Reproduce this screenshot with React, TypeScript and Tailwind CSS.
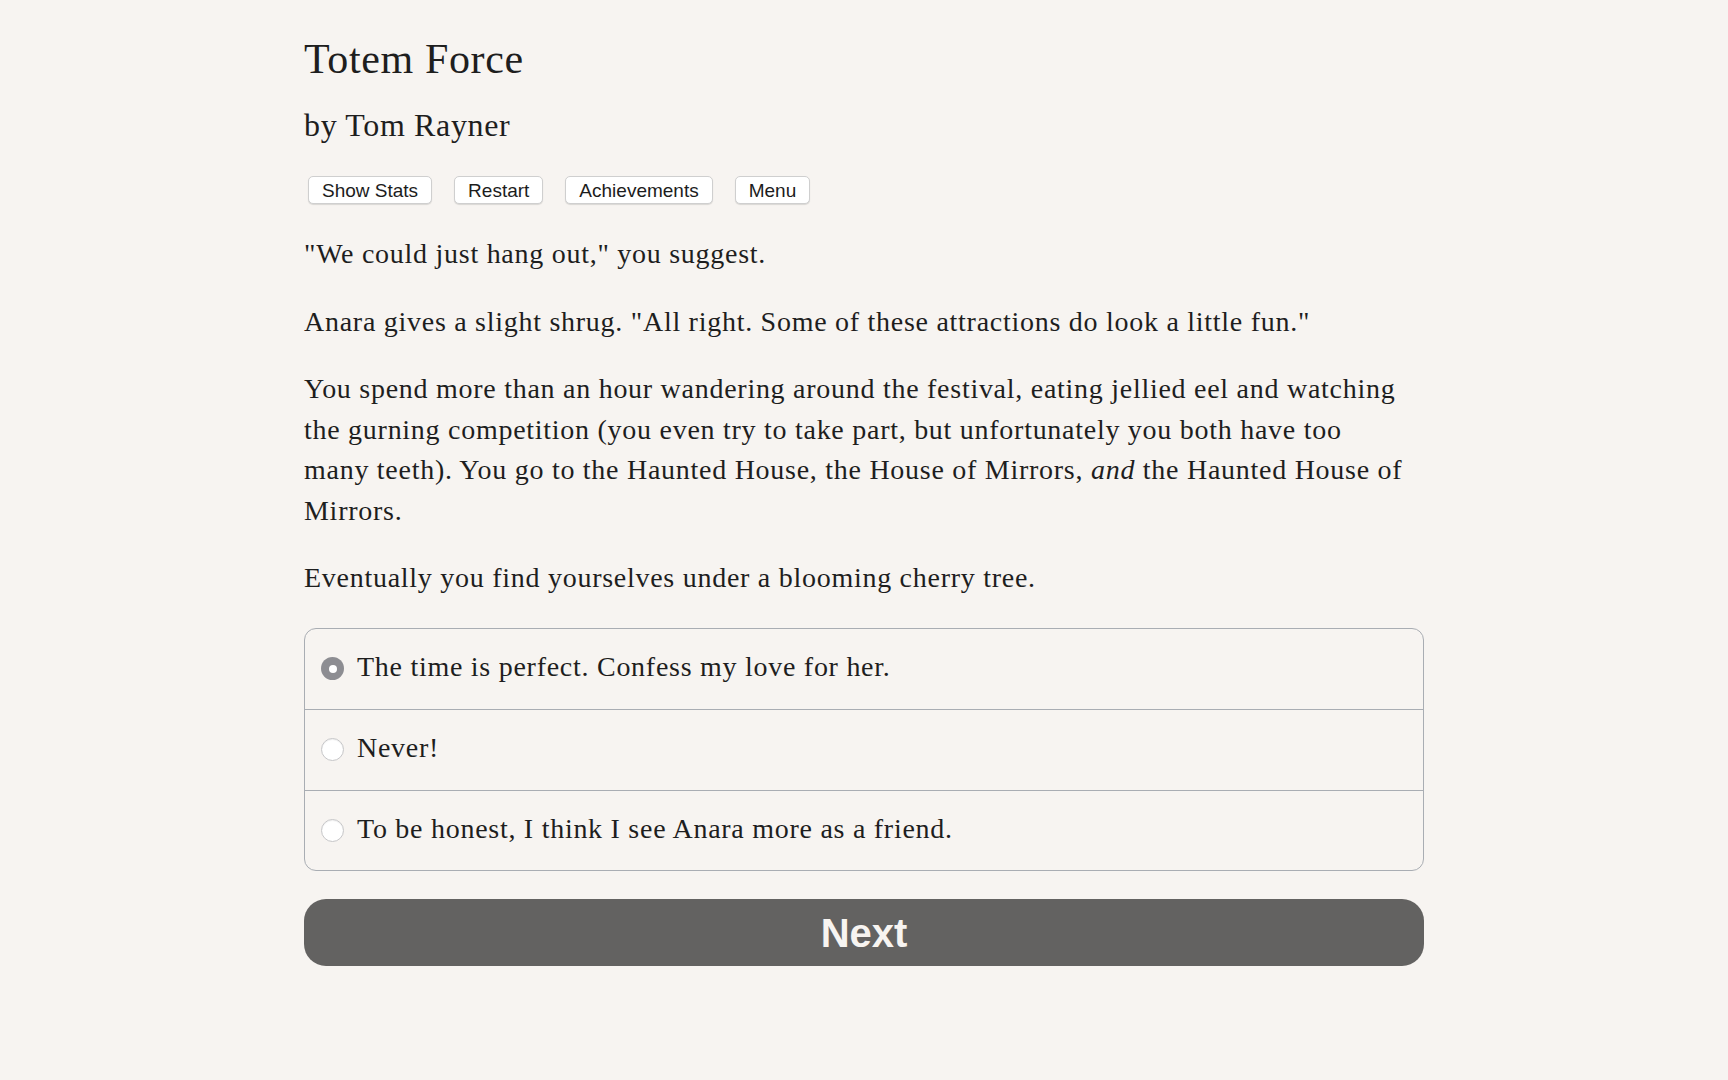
import { useState } from "react";

const choices = [
  "The time is perfect. Confess my love for her.",
  "Never!",
  "To be honest, I think I see Anara more as a friend.",
];

function Radio({ checked }: { checked: boolean }) {
  if (checked) {
    return (
      <span className="flex items-center justify-center w-[23px] h-[23px] shrink-0 rounded-full bg-[#8d8d92]">
        <span className="w-[8px] h-[8px] rounded-full bg-white" />
      </span>
    );
  }
  return (
    <span className="w-[23px] h-[23px] shrink-0 rounded-full bg-white border border-[#c6c6c8] shadow-[inset_0_1px_1px_rgba(0,0,0,0.06)]" />
  );
}

export default function App() {
  const [selected, setSelected] = useState(0);

  return (
    <div className="min-h-screen bg-[#f7f4f1] text-[#1e1e1e] font-['Liberation_Serif',serif]">
      <div className="mx-auto w-[1120px] pt-[35px]">
        <h1 className="text-[42px] leading-[48px] tracking-[0.015em]">Totem Force</h1>
        <h2 className="mt-[23px] text-[32px] leading-[38px] tracking-[0.02em]">by Tom Rayner</h2>

        <div className="mt-[32px] pl-[4px] flex gap-[22px] font-['Liberation_Sans',sans-serif]">
          {["Show Stats", "Restart", "Achievements", "Menu"].map((b) => (
            <button
              key={b}
              className="h-[28px] px-[13px] text-[19px] leading-none text-[#1c1c1c] bg-white border border-[#cfcfcf] rounded-[5px] shadow-[0_1px_1px_rgba(0,0,0,0.12)]"
            >
              {b}
            </button>
          ))}
        </div>

        <div className="mt-[30px] text-[28px] leading-[40.5px] tracking-[0.026em]">
          <p className="mb-[27px]">"We could just hang out," you suggest.</p>
          <p className="mb-[27px]">
            Anara gives a slight shrug. "All right. Some of these attractions do look a little fun."
          </p>
          <p className="mb-[27px]">
            You spend more than an hour wandering around the festival, eating jellied eel and watching
            <br />
            the gurning competition (you even try to take part, but unfortunately you both have too
            <br />
            many teeth). You go to the Haunted House, the House of Mirrors, <i>and</i> the Haunted House of
            <br />
            Mirrors.
          </p>
          <p>Eventually you find yourselves under a blooming cherry tree.</p>
        </div>

        <div className="mt-[29px] border border-[#a9adb3] rounded-[12px] text-[28px] tracking-[0.026em]">
          {choices.map((c, i) => (
            <label
              key={c}
              onClick={() => setSelected(i)}
              className={
                "flex items-center h-[80.5px] pl-[16px] gap-[13px] cursor-pointer " +
                (i > 0 ? "border-t border-[#a9adb3]" : "")
              }
            >
              <Radio checked={selected === i} />
              <span className="leading-[40.5px] -mt-[3px]">{c}</span>
            </label>
          ))}
        </div>

        <button className="mt-[28px] w-full h-[67px] rounded-[22px] bg-[#636261] text-[#f7f4f1] font-['Liberation_Sans',sans-serif] font-bold text-[40px] leading-none">
          Next
        </button>
      </div>
    </div>
  );
}
